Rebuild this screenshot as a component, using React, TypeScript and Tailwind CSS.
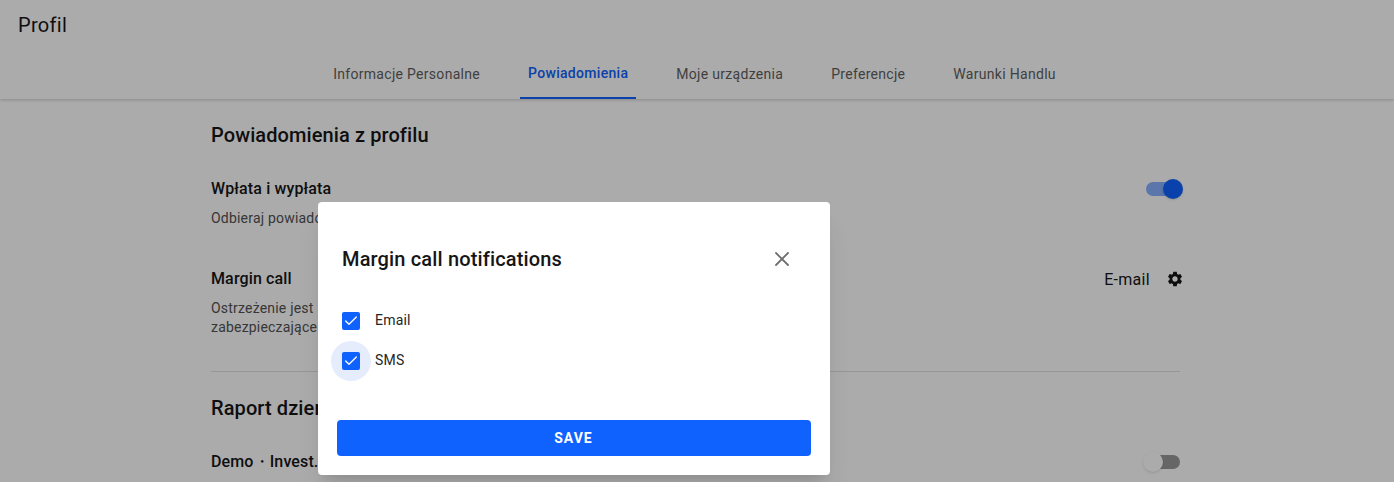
import React from 'react';
import { X, Check } from 'lucide-react';

const tabs = ['Informacje Personalne', 'Powiadomienia', 'Moje urządzenia', 'Preferencje', 'Warunki Handlu'];

function Gear() {
  return (
    <svg width="18" height="18" viewBox="0 0 24 24" fill="currentColor">
      <path d="M19.14 12.94c.04-.3.06-.61.06-.94 0-.32-.02-.64-.07-.94l2.03-1.58c.18-.14.23-.41.12-.61l-1.92-3.32c-.12-.22-.37-.29-.59-.22l-2.39.96c-.5-.38-1.03-.7-1.62-.94l-.36-2.54c-.04-.24-.24-.41-.48-.41h-3.84c-.24 0-.43.17-.47.41l-.36 2.54c-.59.24-1.13.57-1.62.94l-2.39-.96c-.22-.08-.47 0-.59.22L2.74 8.87c-.12.21-.08.47.12.61l2.03 1.58c-.05.3-.09.63-.09.94s.02.64.07.94l-2.03 1.58c-.18.14-.23.41-.12.61l1.92 3.32c.12.22.37.29.59.22l2.39-.96c.5.38 1.03.7 1.62.94l.36 2.54c.05.24.24.41.48.41h3.84c.24 0 .44-.17.47-.41l.36-2.54c.59-.24 1.13-.56 1.62-.94l2.39.96c.22.08.47 0 .59-.22l1.92-3.32c.12-.22.07-.47-.12-.61l-2.01-1.58zM12 15.6c-1.98 0-3.6-1.62-3.6-3.6s1.62-3.6 3.6-3.6 3.6 1.62 3.6 3.6-1.62 3.6-3.6 3.6z" />
    </svg>
  );
}

function Toggle({ on }: { on?: boolean }) {
  return (
    <div className="relative w-[34px] h-[14px]">
      <div className={on ? 'w-full h-full rounded-full bg-[#0f62fe] opacity-50' : 'w-full h-full rounded-full bg-black opacity-40'} />
      <div className={on ? 'absolute -top-[3px] -right-[3px] w-5 h-5 rounded-full bg-[#0f62fe] shadow' : 'absolute -top-[3px] -left-[3px] w-5 h-5 rounded-full bg-white shadow'} />
    </div>
  );
}

function Row({ title, children, right, className }: { title: string; children?: React.ReactNode; right: React.ReactNode; className?: string }) {
  return (
    <div className={`flex justify-between ${className ?? ''}`}>
      <div>
        <p className="text-base leading-5 font-medium tracking-[0.13px] text-[#161616]">{title}</p>
        {children && <p className="mt-[10px] text-sm leading-[19px] tracking-[0.2px] text-[#525252]">{children}</p>}
      </div>
      {right}
    </div>
  );
}

function CheckItem({ label, focused }: { label: string; focused?: boolean }) {
  return (
    <label className="flex items-center h-10 relative">
      {focused && <span className="absolute left-[-6px] top-0 w-10 h-10 rounded-full bg-[#e5edfd]" />}
      <span className="relative w-[18px] h-[18px] ml-[5px] rounded-[2px] bg-[#0f62fe] flex items-center justify-center">
        <Check size={16} strokeWidth={2} className="text-white" />
      </span>
      <span className="ml-[15px] pb-[2px] relative text-sm tracking-[0.2px] text-[#262626]">{label}</span>
    </label>
  );
}

export default function App() {
  return (
    <div className="relative h-[482px] overflow-hidden bg-white font-['Roboto',sans-serif]">
      <header className="h-[99px] shadow-[0_1px_3px_rgba(0,0,0,0.2)] relative">
        <h1 className="pl-[18px] pt-[12px] text-xl leading-[26px] font-normal tracking-[0.3px] text-[#161616]">Profil</h1>
        <nav className="flex justify-center gap-8 mt-[12px] ml-[-5px]">
          {tabs.map((t, i) => (
            <div
              key={t}
              className={
                i === 1
                  ? 'h-[49px] px-2 pb-[2px] flex items-center text-sm font-medium tracking-[0.3px] text-[#0f62fe] border-b-2 border-[#0f62fe]'
                  : 'h-[49px] px-2 pb-[2px] flex items-center text-sm font-normal tracking-[0.3px] text-[#5f5f5f]'
              }
            >
              {t}
            </div>
          ))}
        </nav>
      </header>

      <main className="w-[969px] ml-[211px] pt-[23px]">
        <h2 className="text-xl leading-[26px] font-medium tracking-[0.1px] text-[#161616]">Powiadomienia z profilu</h2>
        <Row className="mt-[31px]" title="Wpłata i wypłata" right={<div className="mt-[3px]"><Toggle on /></div>}>
          Odbieraj powiadomienia
        </Row>
        <Row
          className="mt-[41px]"
          title="Margin call"
          right={
            <div className="flex items-center gap-4 h-5 mr-[-4px] text-base tracking-[0.3px] text-[#161616]">
              <span className="pt-[2px]">E-mail</span>
              <Gear />
            </div>
          }
        >
          Ostrzeżenie jest
          <br />
          zabezpieczające
        </Row>
        <div className="mt-[34px] border-t border-[#e0e0e0]" />
        <h2 className="mt-[23px] text-xl leading-[26px] font-medium tracking-[0.1px] text-[#161616]">Raport dzienny</h2>
        <Row
          className="mt-[31px]"
          title="Demo・Invest."
          right={<div className="mt-[3px]"><Toggle /></div>}
        />
      </main>

      <div className="absolute inset-0 bg-black/[0.33]" />

      <div className="absolute left-[318px] top-[202px] w-[512px] h-[273px] rounded bg-white shadow-xl px-[19px]">
        <div className="flex items-center justify-between pl-[5px] pr-[17px] pt-[42px]">
          <h3 className="text-xl leading-[30px] font-medium tracking-[0.15px] text-[#161616]">Margin call notifications</h3>
          <X size={24} strokeWidth={1.8} className="text-[#6f6f6f]" />
        </div>
        <div className="mt-[27px]">
          <CheckItem label="Email" />
          <CheckItem label="SMS" focused />
        </div>
        <button className="mt-[39px] w-full h-9 rounded bg-[#0f62fe] pr-[1px] text-sm font-bold tracking-[1px] text-white">
          SAVE
        </button>
      </div>
    </div>
  );
}
